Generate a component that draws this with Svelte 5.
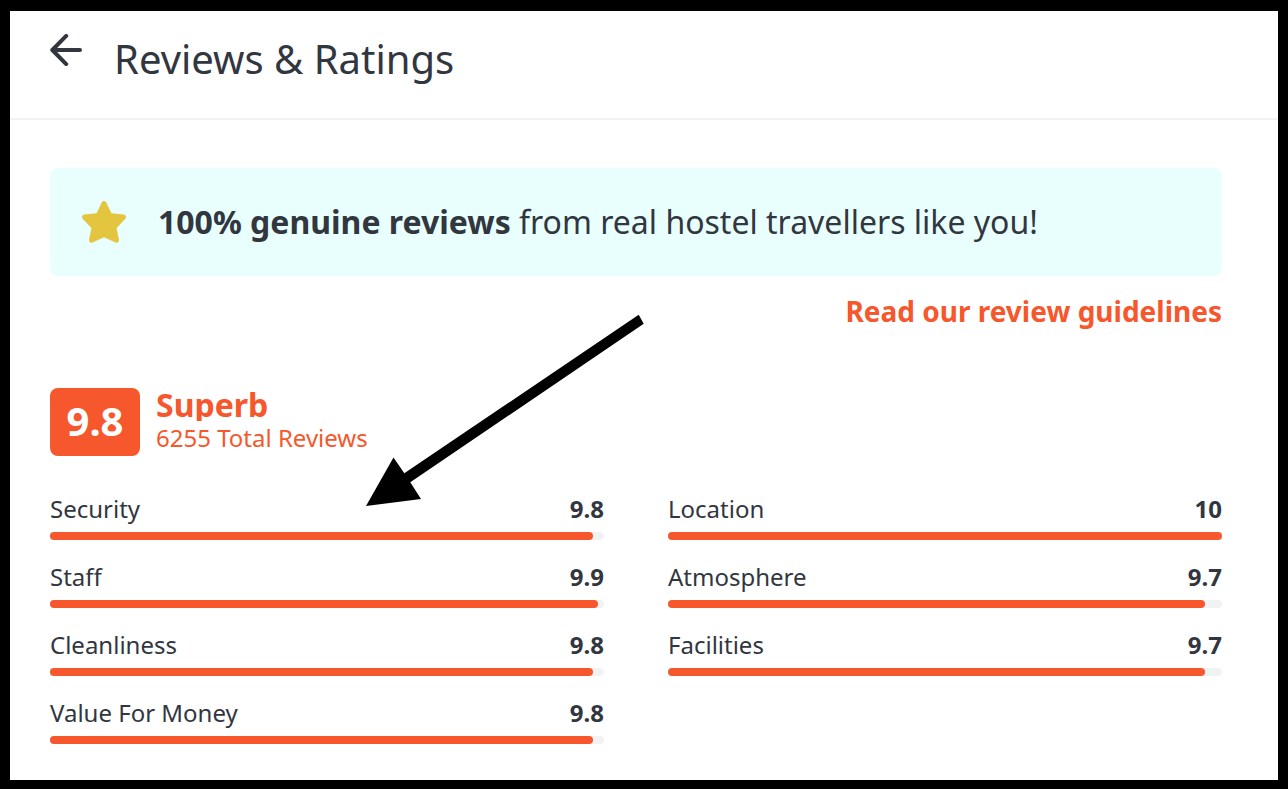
<script>
  const score = 9.8;
  const totalReviews = 6255;

  const ratings = [
    { name: 'Security', value: 9.8 },
    { name: 'Location', value: 10 },
    { name: 'Staff', value: 9.9 },
    { name: 'Atmosphere', value: 9.7 },
    { name: 'Cleanliness', value: 9.8 },
    { name: 'Facilities', value: 9.7 },
    { name: 'Value For Money', value: 9.8 }
  ];
</script>

<div class="page">
  <header class="header">
    <button class="back" type="button" aria-label="Back">
      <svg width="32" height="32" viewBox="0 0 32 32" aria-hidden="true">
        <path d="M16.2 1.9 2.3 16l13.900 14.100M2.500 16h27.500" fill="none" stroke="currentColor" stroke-width="4" stroke-linecap="round" stroke-linejoin="round" />
      </svg>
    </button>
    <h1>Reviews &amp; Ratings</h1>
  </header>

  <main class="content">
    <div class="banner">
      <svg class="star" width="44" height="44" viewBox="0 0 44 44" aria-hidden="true">
        <path d="M19.700 2.400Q20.600 1 22 1t2.300 1.400l5.100 10.800 12.600 1.400q1.700.4 2 2 .1 1.400-.8 2.400L34.600 28l2.400 12q0 1.500-1 2.300-1.200.9-2.600.3L22 37.200l-11.400 5.400q-1.400.6-2.600-.3-1-.8-1-2.300l2.400-12L.8 19Q-.1 18 0 16.600q.4-1.600 2-2l12.600-1.400z" fill="currentColor" />
      </svg>
      <p><strong>100% genuine reviews</strong> from real hostel travellers like you!</p>
    </div>

    <a class="guidelines" href="#guidelines">Read our review guidelines</a>

    <div class="summary">
      <div class="score">{score}</div>
      <div class="info">
        <div class="keyword">Superb</div>
        <div class="total">{totalReviews} Total Reviews</div>
      </div>
    </div>

    <div class="ratings">
      {#each ratings as rating}
        <div class="rating">
          <div class="label">
            <span>{rating.name}</span>
            <strong>{rating.value}</strong>
          </div>
          <div class="track">
            <div class="fill" style="width: {rating.value * 10}%"></div>
          </div>
        </div>
      {/each}
    </div>
  </main>

  <!-- pointer to the security rating -->
  <svg class="pointer" width="280" height="194" viewBox="0 0 280 194" aria-hidden="true">
    <path d="M272.700 2.700 38.300 161.300 27.500 145.500 0 194l55-7-10.700-16.700L277.700 11.700z" />
  </svg>
</div>

<style>
  :global(body) {
    background: #000;
  }

  .page {
    position: relative;
    box-sizing: border-box;
    min-height: 100vh;
    border: solid #000;
    border-width: 11px 10px 9px;
    background: #fff;
    color: #31363f;
    font-family: 'Noto Sans', sans-serif;
  }

  .header {
    display: flex;
    align-items: flex-start;
    gap: 32px;
    padding: 19px 40px 30px;
    border-bottom: 2px solid #f1f2f3;
  }

  .back {
    display: flex;
    padding: 4px 0;
    border: 0;
    background: none;
    color: inherit;
    cursor: pointer;
  }

  h1 {
    margin: 0;
    font-size: 40px;
    font-weight: 400;
    line-height: 58px;
  }

  .content {
    display: flex;
    flex-direction: column;
    padding: 48px 56px 36px 40px;
  }

  .banner {
    display: flex;
    align-items: center;
    gap: 32px;
    padding: 32px;
    border-radius: 8px;
    background: #e8fffe;
  }

  .star {
    flex: none;
    color: #e3c53f;
  }

  .banner p {
    margin: 0;
    font-size: 32px;
    line-height: 44px;
  }

  .guidelines {
    align-self: flex-end;
    margin-top: 16px;
    color: #f6572c;
    font-size: 28px;
    font-weight: 700;
    line-height: 38px;
    text-decoration: none;
  }

  .summary {
    display: flex;
    gap: 16px;
    margin-top: 58px;
    color: #f6572c;
  }

  .score {
    box-sizing: border-box;
    min-width: 90px;
    padding: 0 16px 2px;
    border-radius: 8px;
    background: #f6572c;
    color: #fff;
    font-size: 40px;
    font-weight: 700;
    line-height: 66px;
    text-align: center;
  }

  .keyword {
    overflow: hidden;
    font-size: 32px;
    font-weight: 700;
    line-height: 33px;
  }

  .total {
    font-size: 24px;
    line-height: 33px;
  }

  .ratings {
    display: grid;
    grid-template-columns: 1fr 1fr;
    gap: 20px 64px;
    margin-top: 36px;
  }

  .label {
    display: flex;
    justify-content: space-between;
    margin-bottom: 6px;
    font-size: 24px;
    line-height: 34px;
  }

  .track {
    height: 8px;
    border-radius: 4px;
    background: #f1f2f4;
  }

  .fill {
    height: 100%;
    border-radius: 4px;
    background: #f6572c;
  }

  .pointer {
    position: absolute;
    top: 301px;
    left: 356px;
  }
</style>
